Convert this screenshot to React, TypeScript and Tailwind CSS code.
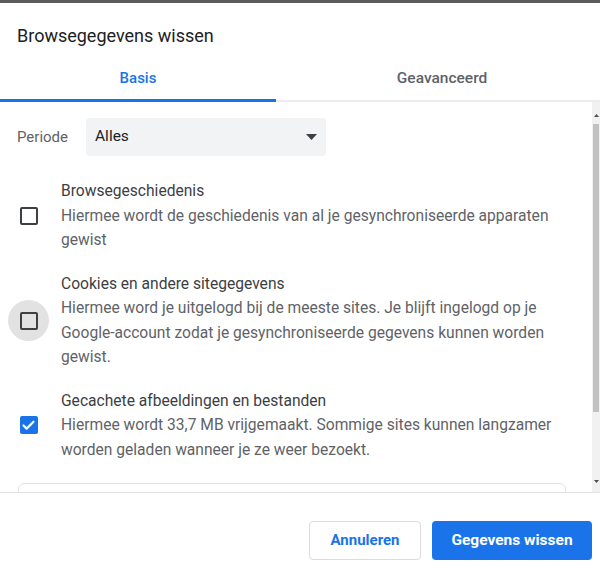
import { Check } from 'lucide-react';

type Item = {
  title: string;
  lines: string[];
  checked: boolean;
  focused?: boolean;
};

const items: Item[] = [
  {
    title: 'Browsegeschiedenis',
    lines: ['Hiermee wordt de geschiedenis van al je gesynchroniseerde apparaten', 'gewist'],
    checked: false,
  },
  {
    title: 'Cookies en andere sitegegevens',
    lines: [
      'Hiermee word je uitgelogd bij de meeste sites. Je blijft ingelogd op je',
      'Google-account zodat je gesynchroniseerde gegevens kunnen worden',
      'gewist.',
    ],
    checked: false,
    focused: true,
  },
  {
    title: 'Gecachete afbeeldingen en bestanden',
    lines: [
      'Hiermee wordt 33,7 MB vrijgemaakt. Sommige sites kunnen langzamer',
      'worden geladen wanneer je ze weer bezoekt.',
    ],
    checked: true,
  },
];

function Checkbox({ checked, focused }: { checked: boolean; focused?: boolean }) {
  return (
    <div
      className={`w-[41px] h-[41px] rounded-full flex items-center justify-center shrink-0 ${
        focused ? 'bg-[#e2e2e2]' : ''
      }`}
    >
      {checked ? (
        <div className="w-[18px] h-[18px] rounded-[2px] bg-[#1a73e8] flex items-center justify-center">
          <Check className="w-[15px] h-[15px] text-white" strokeWidth={3.5} />
        </div>
      ) : (
        <div className="w-[18px] h-[18px] rounded-[2px] border-2 border-[#3c4043]" />
      )}
    </div>
  );
}

export default function App() {
  return (
    <div
      className="w-[600px] h-[580px] bg-white flex flex-col overflow-hidden text-[#202124]"
      style={{ fontFamily: 'Roboto, "Liberation Sans", Arial, sans-serif' }}
    >
      {/* rand bovenaan */}
      <div className="h-[3px] bg-[#5b5b5b] shrink-0" />

      {/* Titel */}
      <div className="h-[52px] pl-[17px] pt-[20px] text-[18px] leading-[26px] text-[#202124] shrink-0">
        Browsegegevens wissen
      </div>

      {/* Tabs */}
      <div className="flex items-end h-[47px] shrink-0">
        <div className="w-[276px] h-[47px] flex items-center justify-center pt-[2px] border-b-[3px] border-[#1a73e8] text-[#1a73e8] text-[15px] font-medium">
          Basis
        </div>
        <div className="flex-1 h-[46px] flex items-center justify-center pt-[1px] border-b-2 border-[#ececec] text-[#5f6368] text-[15.5px] font-medium pl-[8px]">
          Geavanceerd
        </div>
      </div>

      {/* Inhoud */}
      <div className="flex flex-1 min-h-0 border-b border-[#e3e3e3]">
        <div className="flex-1 overflow-hidden pt-[16px]">
          <div className="flex items-center pl-[17px]">
            <span className="w-[69px] text-[15px] text-[#5f6368]">Periode</span>
            <div className="w-[240px] h-[38px] bg-[#f1f3f4] rounded-[4px] flex items-center justify-between pl-[9px] pr-[9px] text-[15.5px] text-[#202124]">
              <span>Alles</span>
              <svg width="11" height="6" viewBox="0 0 11 6">
                <path d="M0 0 L11 0 L5.5 6 Z" fill="#3c4043" />
              </svg>
            </div>
          </div>

          <div className="flex flex-col gap-[19px] mt-[23px]">
            {items.map((item) => (
              <div key={item.title} className="flex items-center pl-[8px]">
                <Checkbox checked={item.checked} focused={item.focused} />
                <div className="ml-[12px] text-[15.6px] leading-[24.5px]">
                  <div className="text-[#3c4043]">{item.title}</div>
                  {item.lines.map((line) => (
                    <div key={line} className="text-[#5f6368] whitespace-nowrap">
                      {line}
                    </div>
                  ))}
                </div>
              </div>
            ))}
          </div>

          <div className="ml-[18px] mr-[26px] mt-[21px] h-[60px] border border-[#e3e3e3] rounded-[6px]" />
        </div>

        {/* Scrollbalk */}
        <div className="w-[8px] bg-[#f1f1f1] flex flex-col items-center shrink-0">
          <svg width="5" height="3" viewBox="0 0 5 3" className="mt-[12px]">
            <path d="M0 3 L2.5 0 L5 3 Z" fill="#505050" />
          </svg>
          <div className="w-[6px] h-[288px] bg-[#c1c1c1] mt-[7px]" />
          <div className="flex-1" />
          <svg width="5" height="3" viewBox="0 0 5 3" className="mb-[9px]">
            <path d="M0 0 L5 0 L2.5 3 Z" fill="#505050" />
          </svg>
        </div>
      </div>

      {/* Knoppen */}
      <div className="h-[87px] shrink-0 flex justify-end items-start pt-[28px] pr-[8px] gap-[11px]">
        <button className="w-[112px] h-[39px] rounded-[4px] border border-[#dadce0] bg-white text-[#1a73e8] text-[15px] font-bold">
          Annuleren
        </button>
        <button className="w-[160px] h-[39px] rounded-[4px] bg-[#1a73e8] text-white text-[15.5px] font-bold">
          Gegevens wissen
        </button>
      </div>
    </div>
  );
}
